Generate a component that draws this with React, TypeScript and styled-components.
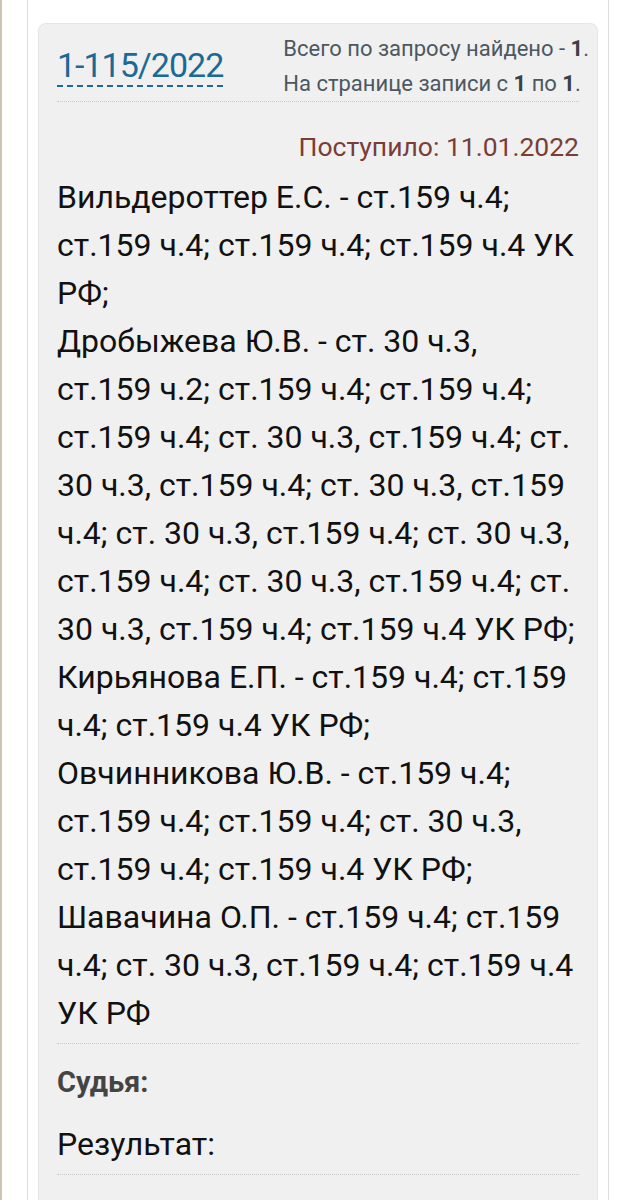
import styled, { createGlobalStyle } from "styled-components";

const GlobalStyle = createGlobalStyle`
    html, body {
        margin: 0;
        padding: 0;
        background: #ffffff;
    }
    body {
        font-family: Roboto, "Noto Sans", "Liberation Sans", sans-serif;
        -webkit-font-smoothing: antialiased;
    }
`;

const defendants = [
    "Вильдероттер Е.С. - ст.159 ч.4; ст.159 ч.4; ст.159 ч.4; ст.159 ч.4 УК РФ;",
    "Дробыжева Ю.В. - ст. 30 ч.3, ст.159 ч.2; ст.159 ч.4; ст.159 ч.4; ст.159 ч.4; ст. 30 ч.3, ст.159 ч.4; ст. 30 ч.3, ст.159 ч.4; ст. 30 ч.3, ст.159 ч.4; ст. 30 ч.3, ст.159 ч.4; ст. 30 ч.3, ст.159 ч.4; ст. 30 ч.3, ст.159 ч.4; ст. 30 ч.3, ст.159 ч.4; ст.159 ч.4 УК РФ;",
    "Кирьянова Е.П. - ст.159 ч.4; ст.159 ч.4; ст.159 ч.4 УК РФ;",
    "Овчинникова Ю.В. - ст.159 ч.4; ст.159 ч.4; ст.159 ч.4; ст. 30 ч.3, ст.159 ч.4; ст.159 ч.4 УК РФ;",
    "Шавачина О.П. - ст.159 ч.4; ст.159 ч.4; ст. 30 ч.3, ст.159 ч.4; ст.159 ч.4 УК РФ",
];

export default function App() {
    return (
        <>
            <GlobalStyle />
            <Page>
                <Frame>
                    <Card>
                        <Header>
                            <CaseLink href="#">1-115/2022</CaseLink>
                            <Stats>
                                <div>
                                    Всего по запросу найдено - <b>1</b>.
                                </div>
                                <div>
                                    На странице записи с <b>1</b> по <b>1</b>.
                                </div>
                            </Stats>
                        </Header>
                        <Posted>Поступило: 11.01.2022</Posted>
                        <Parties>
                            {defendants.map((d) => (
                                <Party key={d}>{d}</Party>
                            ))}
                        </Parties>
                        <Judge>Судья:</Judge>
                        <Result>Результат:</Result>
                    </Card>
                </Frame>
            </Page>
        </>
    );
}

const Page = styled.div`
    height: 1200px;
    border-left: 2px solid #cdc4b4;
    padding-left: 25px;
    overflow: hidden;
`;

const Frame = styled.div`
    width: 560px;
    min-height: 1200px;
    border-left: 1px solid #dcdcdc;
    border-right: 1px solid #dcdcdc;
    padding: 23px 10px 0 10px;
    background: #ffffff;
`;

const Card = styled.div`
    background: #f0f0f0;
    border: 1px solid #e6e6e6;
    border-bottom: none;
    border-radius: 8px 8px 0 0;
    padding: 7px 18px 40px 18px;
    min-height: 1200px;
`;

const Header = styled.div`
    display: flex;
    justify-content: space-between;
    align-items: flex-start;
    border-bottom: 1px dotted #c9c9c9;
`;

const CaseLink = styled.a`
    margin-top: 14px;
    font-size: 34px;
    line-height: 40px;
    color: #1b6a96;
    text-decoration: none;
    border-bottom: 2px dashed #1b6a96;
    letter-spacing: -1px;
`;

const Stats = styled.div`
    margin-right: -10px;
    font-size: 22px;
    line-height: 35px;
    color: #4b5861;
    white-space: nowrap;

    b {
        color: #3a4248;
        font-weight: 700;
    }
`;

const Posted = styled.div`
    margin-top: 27px;
    text-align: right;
    font-size: 26.5px;
    line-height: 36px;
    color: #7a3d37;
`;

const Parties = styled.div`
    margin-top: 8px;
    padding-bottom: 6px;
    border-bottom: 1px dotted #c9c9c9;
`;

const Party = styled.div`
    font-size: 32px;
    line-height: 48px;
    color: #111111;
`;

const Judge = styled.div`
    margin-top: 21px;
    font-size: 29px;
    line-height: 34px;
    font-weight: 700;
    color: #444444;
`;

const Result = styled.div`
    margin-top: 25px;
    padding-bottom: 10px;
    font-size: 32px;
    line-height: 40px;
    color: #111111;
    border-bottom: 1px dotted #c9c9c9;
`;
